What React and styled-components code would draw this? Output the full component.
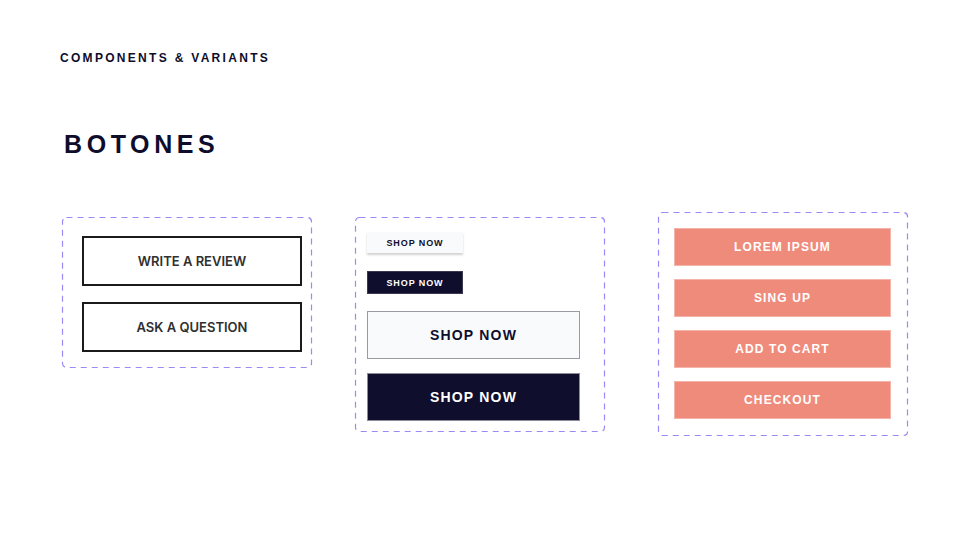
import React from "react";
import styled, { createGlobalStyle } from "styled-components";

const Global = createGlobalStyle`
  html, body { margin: 0; padding: 0; background: #ffffff; }
  body { font-family: "Liberation Sans", Arial, sans-serif; }
`;

const Page = styled.div`
  width: 960px;
  height: 540px;
  box-sizing: border-box;
  padding: 52px 0 0 0;
  background: #fff;
  color: #0e0d2b;
`;

const Eyebrow = styled.div`
  margin-left: 60px;
  font-family: "Liberation Sans", Arial, sans-serif;
  font-weight: 700;
  font-size: 12px;
  letter-spacing: 2.3px;
  line-height: 12px;
  color: #0e0d2b;
`;

const Title = styled.h1`
  margin: 65px 0 0 64px;
  font-family: "Liberation Sans", Arial, sans-serif;
  font-weight: 700;
  font-size: 25px;
  line-height: 30px;
  letter-spacing: 4.6px;
  color: #0e0d2b;
`;

const Row = styled.div`
  display: flex;
  align-items: flex-start;
`;

const Panel = styled.div`
  position: relative;
  box-sizing: border-box;
  width: 250px;
  height: ${(p) => p.$h}px;
  margin-left: ${(p) => p.$left}px;
  margin-top: ${(p) => p.$top || 0}px;
  padding: ${(p) => p.$pad};
  display: flex;
  flex-direction: column;
  align-items: flex-start;
  gap: ${(p) => p.$gap}px;
`;

const Outline = styled.svg`
  position: absolute;
  inset: 0;
  width: 100%;
  height: 100%;
  pointer-events: none;
  overflow: visible;
`;

function DashedFrame() {
  return (
    <Outline>
      <rect
        x="0.5"
        y="0.5"
        width="calc(100% - 1px)"
        height="calc(100% - 1px)"
        rx="4"
        fill="none"
        stroke="#9a8af6"
        strokeWidth="1.2"
        strokeDasharray="6 5"
      />
    </Outline>
  );
}

const OutlineButton = styled.button`
  box-sizing: border-box;
  width: 220px;
  height: 50px;
  border: 2px solid #1b1b1b;
  background: #fff;
  font-family: "Inter", "Liberation Sans", sans-serif;
  font-weight: 600;
  font-size: 13px;
  letter-spacing: 0px;
  color: #303030;
  padding: 0;
`;

const ShopButton = styled.button`
  box-sizing: border-box;
  width: ${(p) => (p.$big ? 213 : 96)}px;
  height: ${(p) => p.$h}px;
  padding: 0;
  margin-bottom: ${(p) => p.$mb || 0}px;
  border: ${(p) =>
    p.$big ? (p.$dark ? "1px solid #8b8b9a" : "1px solid #9a9aa2") : p.$dark ? "1px solid #3a3950" : "none"};
  background: ${(p) => (p.$dark ? "#0f0e2c" : "#f9fafc")};
  color: ${(p) => (p.$dark ? "#ffffff" : "#0f0e2c")};
  box-shadow: ${(p) => (p.$shadow ? "0 2px 2px rgba(0,0,0,0.18)" : "none")};
  font-family: "Liberation Sans", Arial, sans-serif;
  font-weight: 700;
  font-size: ${(p) => (p.$big ? 14 : 9)}px;
  letter-spacing: ${(p) => (p.$big ? 1.2 : 0.9)}px;
`;

const SalmonButton = styled.button`
  box-sizing: border-box;
  width: 217px;
  height: 38px;
  padding: 0;
  border: 1px solid #f5b4a9;
  background: #ef8b7b;
  color: #ffffff;
  font-family: "Liberation Sans", Arial, sans-serif;
  font-weight: 700;
  font-size: 12px;
  letter-spacing: 1.1px;
`;

export default function App() {
  return (
    <Page>
      <Global />
      <Eyebrow>COMPONENTS &amp; VARIANTS</Eyebrow>
      <Title>BOTONES</Title>
      <Row>
        <Panel $left={62} $top={58} $h={151} $pad="19px 0 0 20px" $gap={16}>
          <DashedFrame />
          <OutlineButton>WRITE A REVIEW</OutlineButton>
          <OutlineButton>ASK A QUESTION</OutlineButton>
        </Panel>
        <Panel $left={43} $top={58} $h={215} $pad="15px 0 0 12px" $gap={0}>
          <DashedFrame />
          <ShopButton $h={21} $shadow $mb={18}>SHOP NOW</ShopButton>
          <ShopButton $h={23} $dark $mb={17}>SHOP NOW</ShopButton>
          <ShopButton $big $h={48} $mb={14}>SHOP NOW</ShopButton>
          <ShopButton $big $dark $h={48}>SHOP NOW</ShopButton>
        </Panel>
        <Panel $left={53} $top={53} $h={224} $pad="16px 0 0 16px" $gap={13}>
          <DashedFrame />
          <SalmonButton>LOREM IPSUM</SalmonButton>
          <SalmonButton>SING UP</SalmonButton>
          <SalmonButton>ADD TO CART</SalmonButton>
          <SalmonButton>CHECKOUT</SalmonButton>
        </Panel>
      </Row>
    </Page>
  );
}
